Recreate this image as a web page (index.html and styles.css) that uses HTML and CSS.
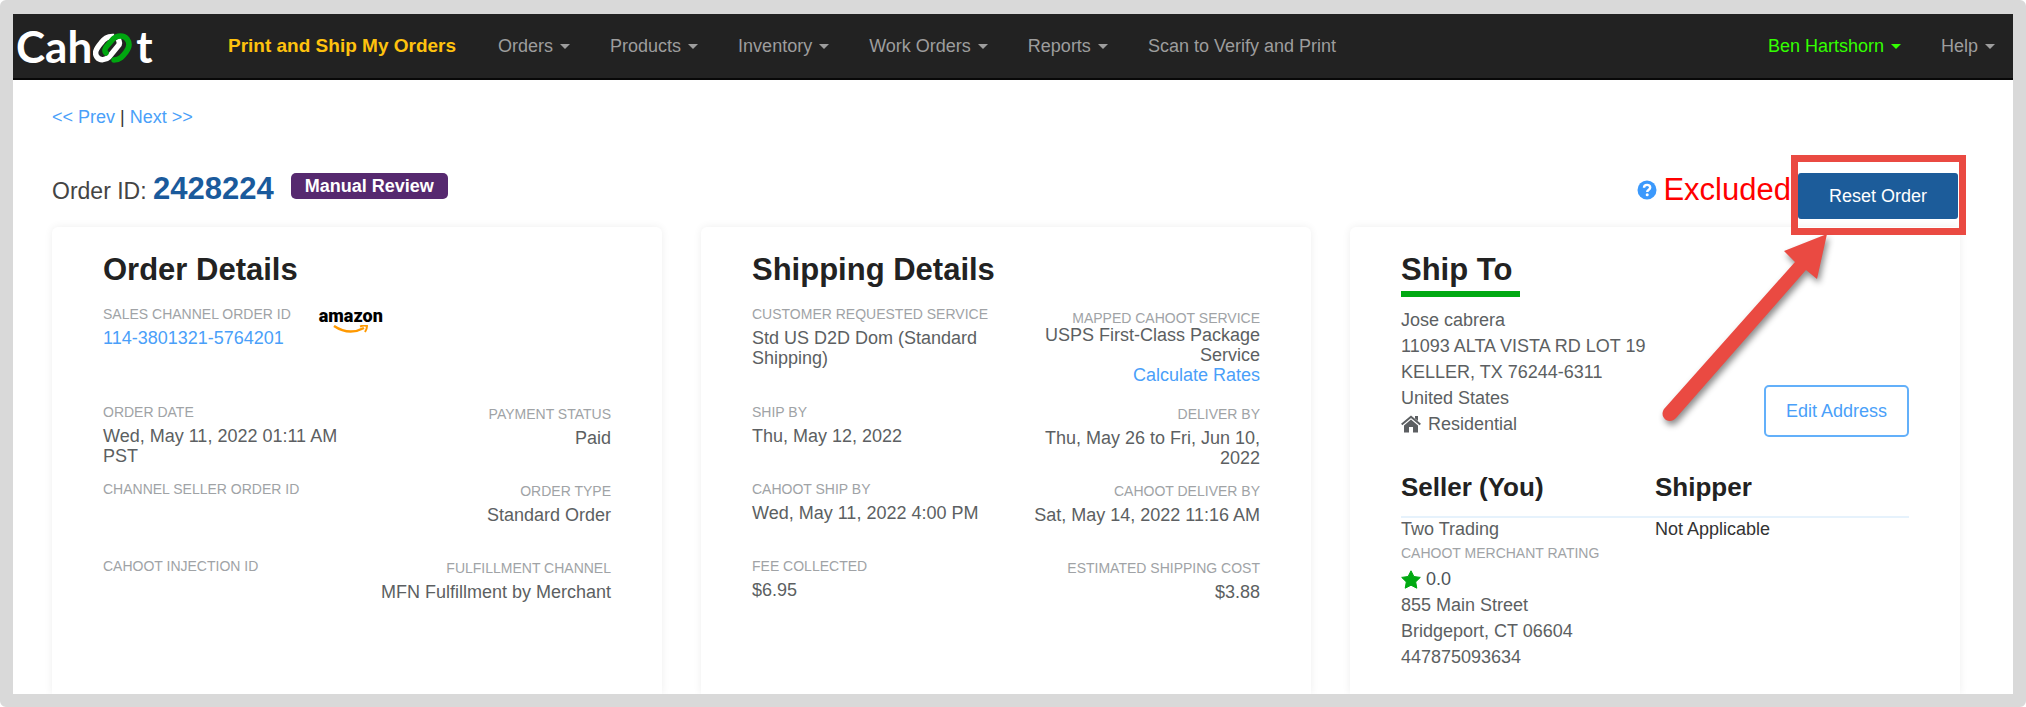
FILE: index.html
```html
<!DOCTYPE html>
<html lang="en">
<head>
<meta charset="utf-8">
<meta name="viewport" content="width=device-width, initial-scale=1">
<title>Order 2428224</title>
<link rel="stylesheet" href="styles.css">
</head>
<body>
<div class="frame">
  <header class="navbar">
    <a class="brand" href="#" aria-label="Cahoot">
      <span>Cah</span>
      <svg class="brand-link" viewBox="0 0 40 30" width="40" height="30" aria-hidden="true">
        <g fill="none" stroke-width="5.500" stroke-linecap="round" stroke-linejoin="round">
          <path stroke="#fff" stroke-linecap="butt" d="M21 3.500C14 3 11 6 8 10C3 16 1 20 4 24C7 28 13 27 16 24L25 13C27 11 27 9 25 6"/>
          <path stroke="#00a610" d="M13 20C11 18 12 15 14 13L20 6C24 2 31 2 34 6C37 10 36 15 33 19C30 23 27 27 21 27"/>
        </g>
      </svg>
      <span>t</span>
    </a>
    <nav class="nav-main">
      <a class="nav-item active" href="#">Print and Ship My Orders</a>
      <a class="nav-item menu" href="#">Orders</a>
      <a class="nav-item menu" href="#">Products</a>
      <a class="nav-item menu" href="#">Inventory</a>
      <a class="nav-item menu" href="#">Work Orders</a>
      <a class="nav-item menu" href="#">Reports</a>
      <a class="nav-item" href="#">Scan to Verify and Print</a>
    </nav>
    <nav class="nav-user">
      <a class="nav-item menu user" href="#">Ben Hartshorn</a>
      <a class="nav-item menu" href="#">Help</a>
    </nav>
  </header>

  <main class="page">
    <div class="pager"><a href="#">&lt;&lt; Prev</a> | <a href="#">Next &gt;&gt;</a></div>

    <div class="title-row">
      <h1 class="order-id">Order ID: <strong>2428224</strong></h1>
      <span class="badge">Manual Review</span>
      <div class="status">
        <svg viewBox="0 0 20 20" width="20" height="20" aria-hidden="true">
          <circle cx="10" cy="10" r="9.500" fill="#3b99fc"/>
          <path d="M7 7.800C7 3.800 13.200 4 13.200 7.500C13.200 9.800 10.200 9.600 10.200 12" fill="none" stroke="#fff" stroke-width="2.400"/>
          <circle cx="10.200" cy="14.700" r="1.500" fill="#fff"/>
        </svg>
        <span>Excluded</span>
      </div>
      <div class="reset">
        <button class="btn-primary" type="button">Reset Order</button>
        <span class="callout"></span>
        <svg class="arrow" viewBox="0 0 190 210" width="190" height="210" aria-hidden="true">
          <path fill="#ea4a42" d="M177 4L134 21L145 32L14 179C11 184 13 188 16 190C20 192 23 191 26 188L156 40L167 49Z"/>
        </svg>
      </div>
    </div>

    <div class="cards">
      <section class="card">
        <h2>Order Details</h2>
        <dl class="fields">
          <div class="wide channel">
            <div>
              <dt>SALES CHANNEL ORDER ID</dt>
              <dd><a href="#">114-3801321-5764201</a></dd>
            </div>
            <div class="amazon">
              <span>amazon</span>
              <svg viewBox="0 0 36 9" width="36" height="9" aria-hidden="true">
                <path d="M1 1Q16 11 31 3" fill="none" stroke="#ff9900" stroke-width="2.500"/>
                <path d="M27 1.500Q31 0 34 1Q34 4 32 7" fill="none" stroke="#ff9900" stroke-width="2"/>
              </svg>
            </div>
          </div>
          <div><dt>ORDER DATE</dt><dd>Wed, May 11, 2022 01:11 AM PST</dd></div>
          <div class="end"><dt>PAYMENT STATUS</dt><dd>Paid</dd></div>
          <div><dt>CHANNEL SELLER ORDER ID</dt><dd></dd></div>
          <div class="end"><dt>ORDER TYPE</dt><dd>Standard Order</dd></div>
          <div><dt>CAHOOT INJECTION ID</dt><dd></dd></div>
          <div class="end"><dt>FULFILLMENT CHANNEL</dt><dd>MFN Fulfillment by Merchant</dd></div>
        </dl>
      </section>

      <section class="card">
        <h2>Shipping Details</h2>
        <dl class="fields">
          <div><dt>CUSTOMER REQUESTED SERVICE</dt><dd>Std US D2D Dom (Standard Shipping)</dd></div>
          <div class="end tight"><dt>MAPPED CAHOOT SERVICE</dt><dd>USPS First-Class Package Service<br><a href="#">Calculate Rates</a></dd></div>
          <div><dt>SHIP BY</dt><dd>Thu, May 12, 2022</dd></div>
          <div class="end"><dt>DELIVER BY</dt><dd>Thu, May 26 to Fri, Jun 10, 2022</dd></div>
          <div><dt>CAHOOT SHIP BY</dt><dd>Wed, May 11, 2022 4:00 PM</dd></div>
          <div class="end"><dt>CAHOOT DELIVER BY</dt><dd>Sat, May 14, 2022 11:16 AM</dd></div>
          <div><dt>FEE COLLECTED</dt><dd>$6.95</dd></div>
          <div class="end"><dt>ESTIMATED SHIPPING COST</dt><dd>$3.88</dd></div>
        </dl>
      </section>

      <section class="card">
        <h2 class="underlined">Ship To</h2>
        <div class="ship-to">
          <address>
            Jose cabrera<br>
            11093 ALTA VISTA RD LOT 19<br>
            KELLER, TX 76244-6311<br>
            United States<br>
            <span class="with-icon"><svg viewBox="0 0 20 18" width="20" height="18" aria-hidden="true">
              <path fill="#5c5f62" d="M10 4.500L17 10.500V17.500H12V12H8V17.500H3V10.500Z"/>
              <path fill="none" stroke="#5c5f62" stroke-width="2" d="M.7 9.500L10 1.700L19.300 9.500"/>
              <path fill="#5c5f62" d="M14 1H17V6L14 3.500Z"/>
            </svg>Residential</span>
          </address>
          <button class="btn-outline" type="button">Edit Address</button>
        </div>
        <div class="parties">
          <h3>Seller (You)</h3>
          <h3>Shipper</h3>
          <div class="seller">
            <div>Two Trading</div>
            <div class="label">CAHOOT MERCHANT RATING</div>
            <div class="with-icon rating"><svg viewBox="0 0 20 19" width="20" height="19" aria-hidden="true">
              <path fill="#00a912" stroke="#00a912" stroke-linejoin="round" d="M10 .8L12.900 6.500L19.300 7.400L14.700 11.900L15.800 18.200L10 15.200L4.200 18.200L5.300 11.900L.7 7.400L7.100 6.500Z"/>
            </svg>0.0</div>
            <div>855 Main Street</div>
            <div>Bridgeport, CT 06604</div>
            <div>447875093634</div>
          </div>
          <div class="shipper">Not Applicable</div>
        </div>
      </section>
    </div>
  </main>
</div>
</body>
</html>
```
FILE: styles.css
```css
* { box-sizing: border-box; }

body {
  margin: 0;
  background: #fff;
  color: #5c5f62;
  font: 18px/26px "Liberation Sans", Arial, sans-serif;
}

a { color: #4a9ff9; text-decoration: none; }
h1, h2, h3, dl, dd { margin: 0; }
button { font: inherit; cursor: pointer; }

.frame {
  display: flex;
  flex-direction: column;
  min-height: 100vh;
  border: 13px solid #d9d9d9;
  border-top-width: 14px;
  border-radius: 6px;
}

/* Navigation */
.navbar {
  display: flex;
  align-items: center;
  padding: 0 18px 0 3px;
  min-height: 66px;
  background: #222;
  border-bottom: 2px solid #080808;
}
.brand {
  display: flex;
  align-items: center;
  width: 212px;
  color: #fff;
  font: 700 44px/48px Lato, sans-serif;
}
.brand-link { margin: 3px 3px 0 1px; }
.nav-main, .nav-user { display: flex; gap: 40px; }
.nav-user { margin-left: auto; }
.nav-item { display: flex; align-items: center; gap: 7px; color: #9d9d9d; white-space: nowrap; }
.nav-item.active { margin-right: 2px; color: #ffc20e; font-size: 19px; font-weight: 700; }
.nav-item.user { color: #3f0; }
.menu::after {
  content: "";
  border: 5px solid transparent;
  border-top-color: currentColor;
  border-bottom: 0;
}

/* Page heading */
.page {
  display: flex;
  flex: 1;
  flex-direction: column;
  padding: 24px 53px 0 39px;
  overflow: hidden;
}
.pager { color: #333; }
.title-row { display: flex; align-items: flex-start; margin: 43px 0 8px; }
.order-id { color: #444; font-size: 23px; font-weight: 400; line-height: 32px; }
.order-id strong { color: #1a5a9c; font-size: 31px; }
.badge {
  margin-left: 17px;
  padding: 0 14px;
  background: #56296f;
  border-radius: 5px;
  color: #fff;
  font-weight: 700;
}
.status {
  display: flex;
  align-items: center;
  gap: 6px;
  margin: 1px 7px 0 auto;
  color: #f00;
  font-size: 31px;
  line-height: 32px;
}
.reset { position: relative; margin-right: 2px; }
.btn-primary {
  display: block;
  padding: 10px 31px;
  background: #1c5c9a;
  border: 0;
  border-radius: 3px;
  color: #fff;
}
.callout { position: absolute; inset: -18px -8px -16px -7px; border: 7px solid #ea4a42; }
.arrow {
  position: absolute;
  top: 57px;
  right: 118px;
  filter: drop-shadow(2px 4px 3px rgba(0, 0, 0, .45));
}

/* Cards */
.cards { display: grid; flex: 1; grid-template-columns: repeat(3, 1fr); gap: 39px; }
.card {
  padding: 25px 51px 24px;
  background: #fff;
  border-radius: 6px 6px 0 0;
  box-shadow: 0 0 8px rgba(0, 0, 0, .07);
}
h2 { color: #222; font-size: 31px; line-height: 36px; }
h3 { color: #222; font-size: 26px; line-height: 30px; }

.fields {
  display: grid;
  grid-template-columns: 1fr 1fr;
  grid-template-rows: 98px;
  grid-auto-rows: 77px;
  margin-top: 17px;
}
.wide { grid-column: 1 / -1; }
.end { padding-top: 2px; text-align: right; }
dt { color: #a0a3a6; font-size: 14px; line-height: 18px; }
dd { margin-top: 5px; line-height: 20px; }
.tight { padding-top: 6px; }
.tight dt { line-height: 14px; }
.tight dd { margin-top: 0; }
.channel { display: flex; gap: 28px; }
.amazon {
  display: flex;
  flex-direction: column;
  align-items: center;
  padding-top: 2px;
  color: #000;
  font: 900 18px/18px Roboto, sans-serif;
}

.underlined {
  width: fit-content;
  padding: 0 8px 3px 0;
  border-bottom: 6px solid #00a912;
}
.ship-to {
  display: flex;
  align-items: flex-end;
  justify-content: space-between;
  margin-top: 10px;
}
address { font-style: normal; }
.with-icon { display: flex; align-items: center; gap: 7px; }
.rating { gap: 5px; color: #4d5359; }
.btn-outline {
  padding: 11px 20px;
  background: #fff;
  border: 2px solid #63b0fa;
  border-radius: 5px;
  color: #4a9ff9;
}
.parties { display: grid; grid-template-columns: 1fr 1fr; margin-top: 35px; }
.parties h3 { padding-bottom: 14px; border-bottom: 2px solid #e6f2fc; }
.seller > :first-child, .shipper { line-height: 22px; }
.label { color: #a0a3a6; font-size: 14px; }
.shipper { color: #333; }
```
